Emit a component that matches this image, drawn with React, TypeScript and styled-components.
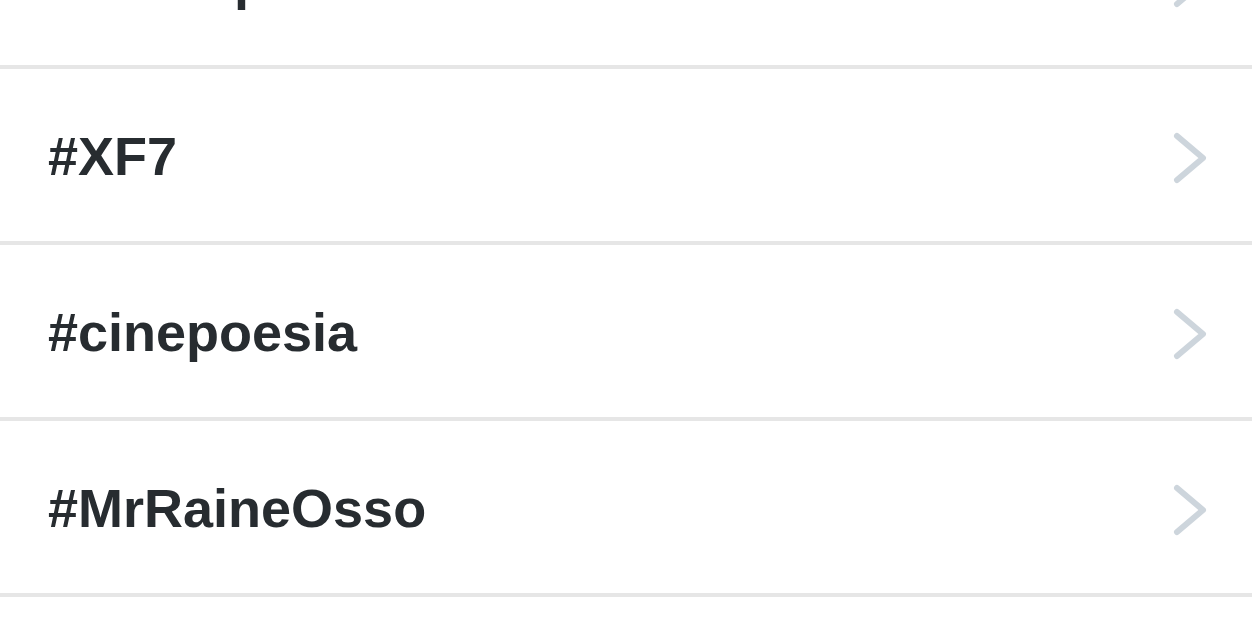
import React from "react";
import styled, { createGlobalStyle } from "styled-components";

const GlobalStyle = createGlobalStyle`
  html, body {
    margin: 0;
    padding: 0;
    background: #ffffff;
    overflow: hidden;
  }
  body {
    font-family: "Liberation Sans", Arial, sans-serif;
  }
`;

const Page = styled.div`
  width: 1252px;
  height: 626px;
  overflow: hidden;
  background: #ffffff;
`;

const List = styled.ul`
  list-style: none;
  margin: -107px 0 0 0;
  padding: 0;
`;

const Row = styled.li`
  height: 172px;
  border-bottom: 4px solid #e6e6e6;
  display: flex;
  align-items: center;
  justify-content: space-between;
  padding: 0 43px 0 48px;
  box-sizing: content-box;
`;

const Tag = styled.span`
  font-family: "Liberation Sans", Arial, sans-serif;
  font-weight: 700;
  font-size: 54px;
  line-height: normal;
  color: #272c30;
  margin-top: 2px;
`;

const Chevron = styled.svg`
  width: 38px;
  height: 54px;
  margin-top: 6px;
  flex: none;
`;

const ChevronIcon = () => (
  <Chevron viewBox="0 0 38 54" fill="none">
    <path
      d="M6 5 L32 27 L6 49"
      stroke="#cdd5dc"
      strokeWidth="6"
      strokeLinecap="round"
      strokeLinejoin="round"
    />
  </Chevron>
);

const tags = ["#Greenpeace", "#XF7", "#cinepoesia", "#MrRaineOsso"];

export default function App() {
  return (
    <Page>
      <GlobalStyle />
      <List>
        {tags.map((t) => (
          <Row key={t}>
            <Tag>{t}</Tag>
            <ChevronIcon />
          </Row>
        ))}
        <Row>
          <Tag />
        </Row>
      </List>
    </Page>
  );
}
